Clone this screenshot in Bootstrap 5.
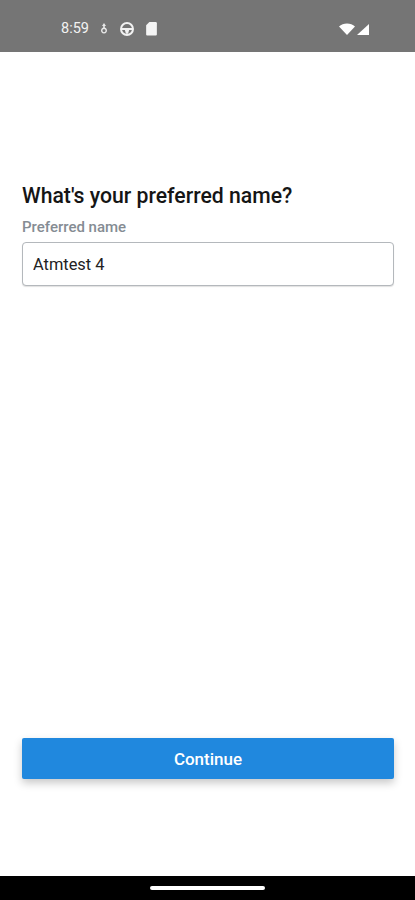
<!DOCTYPE html>
<html lang="en">
<head>
    <meta charset="UTF-8">
    <meta name="viewport" content="width=device-width, initial-scale=1.0">
    <title>Preferred name</title>
    <link href="https://cdn.jsdelivr.net/npm/bootstrap@5.3.0/dist/css/bootstrap.min.css" rel="stylesheet">
    <style>
        html, body { height: 900px; overflow: hidden; }
        body { font-family: Roboto, "Liberation Sans", sans-serif; background: #fff; }
        .phone { height: 900px; }
        .status-strip { height: 52px; background: #757575; color: #f2f2f2; font-size: 14.5px; padding: 5px 44px 0 61px; flex: none; }
        .status-strip svg { display: block; }
        .status-left { gap: 10px; }
        .page-body { padding: 131px 21px 0 22px; }
        .page-title { font-size: 21.2px; font-weight: 500; color: #151515; line-height: 26px; margin: 0 0 10px; }
        .field-label { font-size: 15px; font-weight: 500; color: #858c93; line-height: 16px; margin-bottom: 7px; }
        .name-input.form-control { height: 44px; font-size: 16.4px; color: #222; padding: 0 10px; border: 1px solid #b4b8bc; border-radius: 4px; box-shadow: 0 1px 1px rgba(0,0,0,.12); }
        .continue-btn.btn { height: 41px; width: 100%; background: #2088de; border: 0; border-radius: 2px; color: #fff; font-size: 17px; font-weight: 500; padding: 3px 0 0; box-shadow: 0 4px 8px rgba(0,0,0,.22); margin-bottom: 97px; }
        .gesture-strip { height: 24px; background: #000; flex: none; }
        .gesture-pill { width: 115px; height: 4px; background: #fff; border-radius: 2px; }
    </style>
</head>
<body>
    <div class="phone d-flex flex-column">
        <!-- status bar -->
        <div class="status-strip d-flex align-items-center justify-content-between">
            <div class="status-left d-flex align-items-center">
                <span>8:59</span>
                <svg width="10" height="14" viewBox="0 0 10 14" fill="#e8e8e8"><path d="M5 1 7 4H5.800v1.600A3 3 0 1 1 4.200 5.600V4H3ZM5 7a1.600 1.600 0 1 0 0 3.200A1.600 1.600 0 0 0 5 7Z"/></svg>
                <svg width="16" height="16" viewBox="0 0 15 15"><circle cx="7.500" cy="7.500" r="5.600" fill="none" stroke="#f2f2f2" stroke-width="1.900"/><path d="M2 6.500h11v2H9.500L8.500 12h-2L5.500 8.500H2Z" fill="#f2f2f2"/></svg>
                <svg width="13" height="15" viewBox="0 0 12 14" fill="#f5f5f5"><path d="M4 1h6a1 1 0 0 1 1 1v10.500a1 1 0 0 1-1 1H2a1 1 0 0 1-1-1V4Z"/></svg>
            </div>
            <div class="d-flex align-items-center">
                <svg width="32" height="14" viewBox="0 0 32 14" fill="#fff"><path d="M0 4.500C2 2.500 5 1.500 8 1.500s6 1 8 3L8 13Z"/><path d="M30 2v11H18Z"/></svg>
            </div>
        </div>

        <div class="page-body flex-grow-1 d-flex flex-column">
            <h1 class="page-title">What's your preferred name?</h1>
            <label class="field-label" for="prefName">Preferred name</label>
            <input id="prefName" class="form-control name-input" type="text" value="Atmtest 4">
            <div class="mt-auto">
                <button class="btn continue-btn" type="button">Continue</button>
            </div>
        </div>

        <!-- gesture bar -->
        <div class="gesture-strip d-flex align-items-center justify-content-center">
            <div class="gesture-pill"></div>
        </div>
    </div>
    <script src="https://cdn.jsdelivr.net/npm/bootstrap@5.3.0/dist/js/bootstrap.bundle.min.js"></script>
</body>
</html>
